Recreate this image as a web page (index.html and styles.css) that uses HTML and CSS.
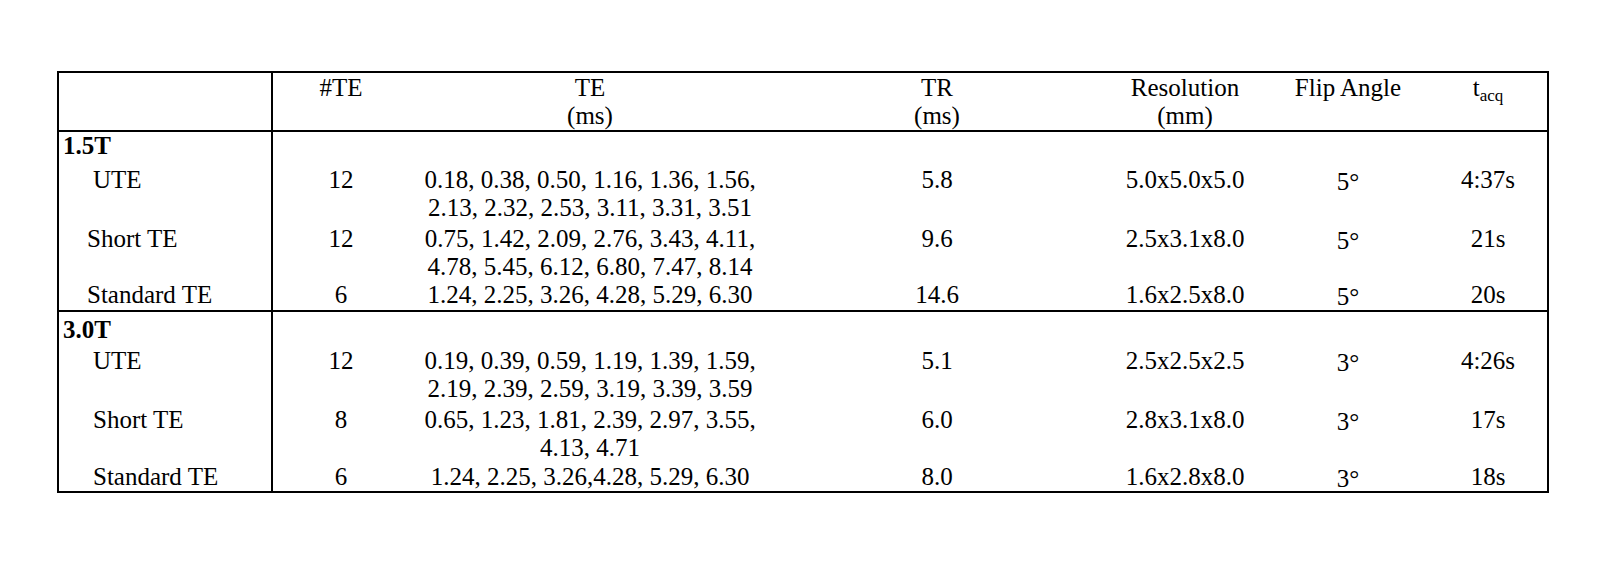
FILE: index.html
```html
<!DOCTYPE html>
<html lang="en">
<head>
    <meta charset="UTF-8">
    <title>Sequence Parameters</title>
    <link rel="stylesheet" href="styles.css">
</head>
<body>

    <div class="page">
        <table class="params">
            <colgroup>
                <col class="c-name">
                <col class="c-nte">
                <col class="c-te">
                <col class="c-tr">
                <col class="c-res">
                <col class="c-flip">
                <col class="c-tacq">
            </colgroup>
            <thead>
                <tr>
                    <th class="name"></th>
                    <th>#TE</th>
                    <th>TE<br>(ms)</th>
                    <th>TR<br>(ms)</th>
                    <th>Resolution<br>(mm)</th>
                    <th>Flip Angle</th>
                    <th>t<sub>acq</sub></th>
                </tr>
            </thead>
            <tbody>
                <tr class="group first">
                    <td class="name">1.5T</td>
                    <td></td><td></td><td></td><td></td><td></td><td></td>
                </tr>
                <tr class="pad-6">
                    <td class="name sub-a">UTE</td>
                    <td>12</td>
                    <td>0.18, 0.38, 0.50, 1.16, 1.36, 1.56,<br>2.13, 2.32, 2.53, 3.11, 3.31, 3.51</td>
                    <td>5.8</td>
                    <td>5.0x5.0x5.0</td>
                    <td><span class="deg">5°</span></td>
                    <td>4:37s</td>
                </tr>
                <tr class="pad-3">
                    <td class="name sub-b">Short TE</td>
                    <td>12</td>
                    <td>0.75, 1.42, 2.09, 2.76, 3.43, 4.11,<br>4.78, 5.45, 6.12, 6.80, 7.47, 8.14</td>
                    <td>9.6</td>
                    <td>2.5x3.1x8.0</td>
                    <td><span class="deg">5°</span></td>
                    <td>21s</td>
                </tr>
                <tr class="last">
                    <td class="name sub-b">Standard TE</td>
                    <td>6</td>
                    <td>1.24, 2.25, 3.26, 4.28, 5.29, 6.30</td>
                    <td>14.6</td>
                    <td>1.6x2.5x8.0</td>
                    <td><span class="deg">5°</span></td>
                    <td>20s</td>
                </tr>

                <tr class="group second">
                    <td class="name">3.0T</td>
                    <td></td><td></td><td></td><td></td><td></td><td></td>
                </tr>
                <tr class="pad-3">
                    <td class="name sub-a">UTE</td>
                    <td>12</td>
                    <td>0.19, 0.39, 0.59, 1.19, 1.39, 1.59,<br>2.19, 2.39, 2.59, 3.19, 3.39, 3.59</td>
                    <td>5.1</td>
                    <td>2.5x2.5x2.5</td>
                    <td><span class="deg">3°</span></td>
                    <td>4:26s</td>
                </tr>
                <tr class="pad-3">
                    <td class="name sub-a">Short TE</td>
                    <td>8</td>
                    <td>0.65, 1.23, 1.81, 2.39, 2.97, 3.55,<br>4.13, 4.71</td>
                    <td>6.0</td>
                    <td>2.8x3.1x8.0</td>
                    <td><span class="deg">3°</span></td>
                    <td>17s</td>
                </tr>
                <tr class="pad-1">
                    <td class="name sub-a">Standard TE</td>
                    <td>6</td>
                    <td>1.24, 2.25, 3.26,4.28, 5.29, 6.30</td>
                    <td>8.0</td>
                    <td>1.6x2.8x8.0</td>
                    <td><span class="deg">3°</span></td>
                    <td>18s</td>
                </tr>
            </tbody>
        </table>
    </div>

</body>
</html>
```

FILE: styles.css
```css
body {
    margin: 0;
    padding: 0;
    background-color: #fff;
    color: #000;
    font-family: "Liberation Serif", "Times New Roman", serif;
}
.page {
    padding: 71px 0 0 57px;
}
.params {
    width: 1492px;
    table-layout: fixed;
    border-collapse: separate;
    border-spacing: 0;
    border: 2px solid #000;
    font-size: 25px;
    line-height: 28px;
}
.c-name { width: 214px; }
.c-nte { width: 136px; }
.c-te { width: 362px; }
.c-tr { width: 332px; }
.c-res { width: 164px; }
.c-flip { width: 162px; }
.c-tacq { width: 118px; }

.params th,
.params td {
    padding: 0;
    text-align: center;
    vertical-align: top;
    font-weight: normal;
    white-space: nowrap;
}
.params th {
    padding-top: 1px;
    border-bottom: 2px solid #000;
}
.params .name {
    text-align: left;
    border-right: 2px solid #000;
}
.params sub {
    font-size: 17px;
    line-height: 0;
    vertical-align: -5px;
}
.group td {
    font-weight: bold;
}
.group .name {
    padding-left: 4px;
}
.group.first td { padding-top: 0; }
.group.second td {
    padding-top: 4px;
    border-top: 2px solid #000;
}
.pad-6 td { padding-top: 6px; }
.pad-3 td { padding-top: 3px; }
.pad-1 td { padding-top: 1px; }
.last td { padding-bottom: 1px; }

.params .sub-a { padding-left: 34px; }
.params .sub-b { padding-left: 28px; }

.deg {
    display: inline-block;
    transform: translateY(2px);
}
```
